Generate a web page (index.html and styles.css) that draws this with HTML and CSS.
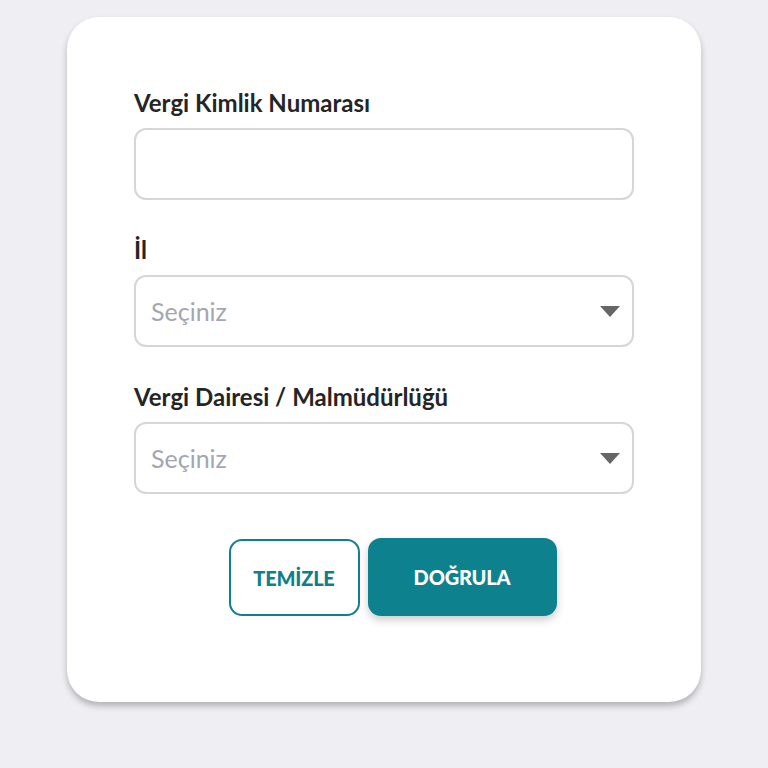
FILE: index.html
```html
<!DOCTYPE html>
<html lang="tr">
<head>
<meta charset="utf-8">
<link rel="stylesheet" href="styles.css">
</head>
<body>
<div class="card">
  <form class="form">
    <div class="field">
      <label class="label">Vergi Kimlik Numarası</label>
      <div class="input"></div>
    </div>
    <div class="field">
      <label class="label">İl</label>
      <div class="input select"><span class="placeholder">Seçiniz</span><span class="caret"></span></div>
    </div>
    <div class="field">
      <label class="label">Vergi Dairesi / Malmüdürlüğü</label>
      <div class="input select"><span class="placeholder">Seçiniz</span><span class="caret"></span></div>
    </div>
    <div class="actions">
      <button type="button" class="btn btn-outline">TEMİZLE</button>
      <button type="button" class="btn btn-primary">DOĞRULA</button>
    </div>
  </form>
</div>
</body>
</html>
```
FILE: styles.css
```css
html, body { margin: 0; padding: 0; }
body {
  background: #eeeef3;
  font-family: Lato, "Open Sans", "Liberation Sans", sans-serif;
  width: 768px;
  height: 768px;
  overflow: hidden;
}
.card {
  margin: 17px 0 0 67px;
  width: 634px;
  height: 685px;
  box-sizing: border-box;
  background: #fff;
  border-radius: 32px;
  box-shadow: 0 4px 6px rgba(0,0,0,0.25);
  padding: 71px 67px 0 67px;
}
.form { display: flex; flex-direction: column; }
.field { display: flex; flex-direction: column; margin-bottom: 35px; }
.label {
  font-size: 24px;
  font-weight: 700;
  color: #252525;
  line-height: 30px;
  margin-bottom: 10px;
}
.input {
  height: 72px;
  box-sizing: border-box;
  border: 2px solid #d6d6d9;
  border-radius: 12px;
  display: flex;
  align-items: center;
  padding: 0 12px 0 15px;
}
.select { justify-content: space-between; }
.placeholder { font-size: 25px; color: #a4a6b1; }
.caret {
  width: 0; height: 0;
  border-left: 10px solid transparent;
  border-right: 10px solid transparent;
  border-top: 11px solid #666;
}
.actions {
  display: flex;
  justify-content: center;
  gap: 8px;
  margin-top: 9px;
  padding-left: 17px;
}
.btn {
  font-family: inherit;
  font-size: 20px;
  font-weight: 900;
  letter-spacing: -0.2px;
  border-radius: 13px;
  height: 78px;
  cursor: pointer;
}
.btn-outline {
  width: 131px;
  background: #fff;
  color: #0f7f8c;
  border: 2px solid #137f8e;
  height: 77px;
  margin-top: 1px;
}
.btn-primary {
  width: 189px;
  background: #0e818f;
  color: #fff;
  border: none;
  box-shadow: 0 4px 8px rgba(0,0,0,0.2);
}
```
